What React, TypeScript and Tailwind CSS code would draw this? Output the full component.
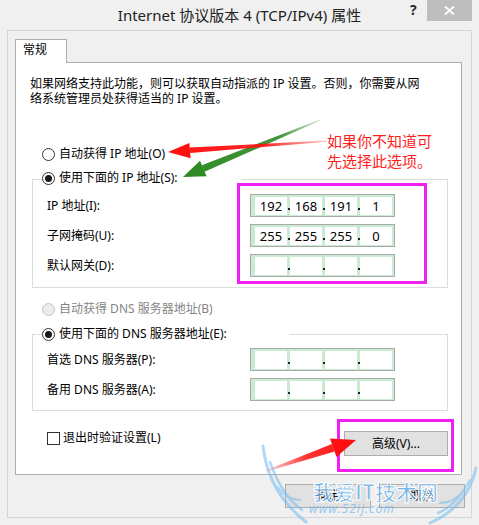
import React from "react";

const Radio = ({ checked, disabled }: { checked?: boolean; disabled?: boolean }) => (
  <span
    className={`w-[13px] h-[13px] shrink-0 rounded-full border flex items-center justify-center ${
      disabled ? "border-[#c4c4c4] bg-[#ececec]" : "border-[#333333] bg-white"
    }`}
  >
    {checked && <span className="w-[7px] h-[7px] rounded-full bg-[#1a1a1a]" />}
  </span>
);

const IPField = ({ values }: { values?: string[] }) => (
  <div className="flex w-[145px] h-[23px] border border-[#a9a9a9] bg-[#c8ebd1] pl-[4px] pr-[2px] pt-[2px] pb-[1px]">
    {[0, 1, 2, 3].map((i) => (
      <React.Fragment key={i}>
        {i > 0 && (
          <div className="w-[3px] flex flex-col items-center pt-[11px]">
            <div className="w-[2px] h-[2px] bg-[#222222]" />
          </div>
        )}
        <div className="w-[32px] h-full bg-white flex items-center justify-center text-[13px] leading-none text-black">
          {values ? values[i] : ""}
        </div>
      </React.Fragment>
    ))}
  </div>
);

const Row = ({ label, values }: { label: string; values?: string[] }) => (
  <div className="flex items-center h-[23px]">
    <span className="w-[203px] text-[12px] leading-[16px] text-black">{label}</span>
    <IPField values={values} />
  </div>
);

export default function App() {
  return (
    <div className="relative w-[479px] h-[525px] bg-[#f0f0f0] overflow-hidden font-['Noto_Sans','Noto_Sans_CJK_SC',sans-serif] text-black">
      {/* Title bar */}
      <div className="flex h-[30px]">
        <div className="w-[74px]" />
        <div className="flex-1 text-center pt-[5px] text-[15px] leading-[20px] text-[#222222] whitespace-nowrap">
          Internet 协议版本 4 (TCP/IPv4) 属性
        </div>
        <div className="w-[74px] flex justify-between pr-[7px]">
          <span className="ml-[5px] pt-[1px] text-[14px] leading-[18px] font-bold text-[#2a2a2a]">?</span>
          <div className="w-[45px] h-[21px] bg-[#bebebe] flex items-center justify-center">
            <svg width="11" height="9" viewBox="0 0 11 9">
              <path d="M1 0.5 L10 8.5 M10 0.5 L1 8.5" stroke="#ffffff" strokeWidth="1.8" />
            </svg>
          </div>
        </div>
      </div>

      {/* Frame */}
      <div className="mx-[7px] h-[488px] border border-[#d6d6d6] pt-[8px] pl-[7px] pr-[9px]">
        <div className="relative z-10 w-[52px] h-[24px] border border-b-0 border-[#adadad] bg-white pl-[7px] pt-[2px] text-[12px] leading-[16px]">
          常规
        </div>
        <div className="-mt-[1px] h-[413px] border border-[#adadad] bg-white flex flex-col">
          <p className="pl-[14px] pt-[13px] text-[12px] leading-[15px] whitespace-nowrap">
            如果网络支持此功能，则可以获取自动指派的 IP 设置。否则，你需要从网
            <br />
            络系统管理员处获得适当的 IP 设置。
          </p>

          <div className="flex items-center gap-[4px] ml-[26px] mt-[40px] h-[16px] text-[12px] leading-[16px]">
            <Radio />
            <span>自动获得 IP 地址(O)</span>
          </div>

          <fieldset className="ml-[16px] w-[416px] mt-[8px] border border-[#dcdcdc] pb-[10px]">
            <legend className="ml-[9px] w-[199px] pb-[2px]">
              <div className="flex items-center gap-[4px] h-[16px] text-[12px] leading-[16px]">
                <Radio checked />
                <span>使用下面的 IP 地址(S):</span>
              </div>
            </legend>
            <div className="flex flex-col gap-[7px] pl-[14px] pt-[6px]">
              <Row label="IP 地址(I):" values={["192", "168", "191", "1"]} />
              <Row label="子网掩码(U):" values={["255", "255", "255", "0"]} />
              <Row label="默认网关(D):" />
            </div>
          </fieldset>

          <div className="flex items-center gap-[4px] ml-[26px] mt-[13px] h-[16px] text-[12px] leading-[16px] text-[#858585]">
            <Radio disabled />
            <span>自动获得 DNS 服务器地址(B)</span>
          </div>

          <fieldset className="ml-[16px] w-[416px] mt-[9px] border border-[#dcdcdc] pb-[9px]">
            <legend className="ml-[9px] w-[247px]">
              <div className="flex items-center gap-[4px] h-[16px] text-[12px] leading-[16px]">
                <Radio checked />
                <span>使用下面的 DNS 服务器地址(E):</span>
              </div>
            </legend>
            <div className="flex flex-col gap-[7px] pl-[14px] pt-[6px]">
              <Row label="首选 DNS 服务器(P):" />
              <Row label="备用 DNS 服务器(A):" />
            </div>
          </fieldset>

          <div className="flex justify-between items-start mt-[20px] pl-[31px] pr-[13px]">
            <div className="flex items-center gap-[3px] h-[14px] text-[12px] leading-[16px]">
              <span className="w-[13px] h-[13px] border border-[#333333] bg-white" />
              <span>退出时验证设置(L)</span>
            </div>
            <div className="w-[104px] h-[25px] border border-[#adadad] bg-[#e1e1e1] flex items-center justify-center text-[12px] leading-[16px]">
              高级(V)...
            </div>
          </div>
        </div>

        <div className="flex justify-end gap-[8px] mt-[9px] -mr-[3px]">
          <div className="w-[86px] h-[24px] border border-[#adadad] bg-[#e1e1e1] flex items-center justify-center text-[12px] leading-[16px]">
            确定
          </div>
          <div className="w-[86px] h-[24px] border border-[#adadad] bg-[#e1e1e1] flex items-center justify-center text-[12px] leading-[16px]">
            取消
          </div>
        </div>
      </div>

      {/* Annotations */}
      <div className="absolute left-[237px] top-[183px] w-[190px] h-[101px] border-[3px] border-[#f21ff2]" />
      <div className="absolute left-[337px] top-[419px] w-[117px] h-[53px] border-[3px] border-[#f21ff2]" />
      <div className="absolute left-[327px] top-[131px] text-[15px] leading-[20px] text-[#ff1e1e] font-['Noto_Sans_CJK_SC',sans-serif] whitespace-nowrap">
        如果你不知道可
        <br />
        先选择此选项。
      </div>

      <svg className="absolute left-0 top-0 pointer-events-none" width="479" height="525" viewBox="0 0 479 525">
        <defs>
          <linearGradient id="rg1" x1="168" y1="0" x2="330" y2="0" gradientUnits="userSpaceOnUse">
            <stop offset="0" stopColor="#ff1010" stopOpacity="1" />
            <stop offset="0.6" stopColor="#ff1010" stopOpacity="0.9" />
            <stop offset="1" stopColor="#ff1010" stopOpacity="0.2" />
          </linearGradient>
          <linearGradient id="gg1" x1="183" y1="177" x2="322" y2="119" gradientUnits="userSpaceOnUse">
            <stop offset="0" stopColor="#2f8a26" stopOpacity="1" />
            <stop offset="0.7" stopColor="#2f8a26" stopOpacity="0.9" />
            <stop offset="1" stopColor="#2f8a26" stopOpacity="0.15" />
          </linearGradient>
          <linearGradient id="rg2" x1="266" y1="471" x2="356" y2="440" gradientUnits="userSpaceOnUse">
            <stop offset="0" stopColor="#ff1010" stopOpacity="0.15" />
            <stop offset="0.45" stopColor="#ff1010" stopOpacity="0.85" />
            <stop offset="1" stopColor="#ff1010" stopOpacity="1" />
          </linearGradient>
        </defs>
        {/* green arrow */}
        <polygon points="204.5,171.8 201.9,165.2 320,119.5 320.4,120.5" fill="url(#gg1)" />
        <polygon points="183,177 206.6,176.2 200,160.8" fill="#2f8a26" />
        {/* red arrow top */}
        <polygon points="190.3,153 189.8,147.6 327,140.4 327,141.8" fill="url(#rg1)" />
        <polygon points="168,152 190.6,158.2 189.4,143" fill="#ff1010" />
        {/* red arrow bottom */}
        <polygon points="334.6,451.5 332,444 266,470.3 266.6,471.6" fill="url(#rg2)" />
        <polygon points="356,440 336.5,457 330,438.5" fill="#ff1010" />
      </svg>

      {/* Watermark */}
      <svg className="absolute left-0 top-0 pointer-events-none opacity-60" width="479" height="525" viewBox="0 0 479 525">
        <g fill="none" stroke="#7cc0f0" strokeLinecap="round">
          <path d="M263 446 Q 268 492 306 522" strokeWidth="3" />
          <path d="M270 462 Q 282 496 302 510" strokeWidth="2.5" />
          <path d="M277 487 Q 288 500 300 500" strokeWidth="2" />
          <path d="M476 468 Q 468 506 430 523" strokeWidth="3" />
          <path d="M470 480 Q 456 506 438 513" strokeWidth="2.5" />
          <path d="M462 493 Q 452 503 440 503" strokeWidth="2" />
        </g>
      </svg>
      <div className="absolute left-[313px] top-[478px] text-[21px] leading-[26px] font-bold text-[#4aa3ea]/70 whitespace-nowrap font-['Noto_Sans_CJK_SC',sans-serif] [-webkit-text-stroke:1px_#ffffff]">
        我爱IT技术网
      </div>
      <div className="absolute left-[309px] top-[502px] text-[12px] leading-[14px] italic text-[#6cb6ef]/70 whitespace-nowrap tracking-[1px] font-['Noto_Sans',sans-serif]">
        www.52ij.com
      </div>
    </div>
  );
}
